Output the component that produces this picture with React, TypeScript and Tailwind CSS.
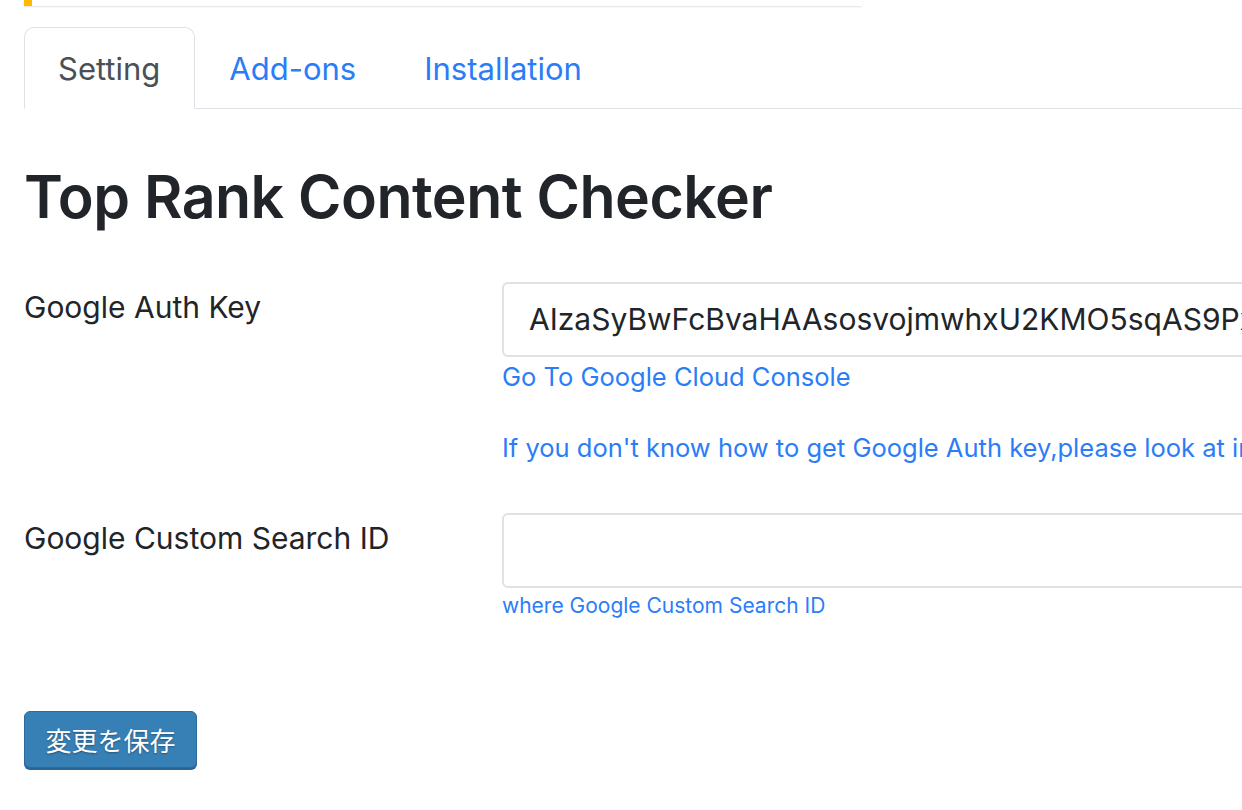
import { useState } from 'react';

const tabs = ['Setting', 'Add-ons', 'Installation'];

export default function App() {
  const [activeTab, setActiveTab] = useState('Setting');
  const [authKey, setAuthKey] = useState('AIzaSyBwFcBvaHAAsosvojmwhxU2KMO5sqAS9PxT0cLm');
  const [searchId, setSearchId] = useState('');

  return (
    <div className="w-[1242px] h-[810px] overflow-hidden bg-white font-['Inter','Noto_Sans',sans-serif] text-[#212529]">
      {/* admin notice, scrolled mostly out of view */}
      <div className="ml-[24px] w-[838px] h-[6px] bg-white border-l-[8px] border-[#ffb900] shadow-[0_1px_2px_rgba(0,0,0,0.12)]"></div>

      <div className="ml-[24px] mt-[21px] w-[1400px] flex border-b border-[#dee2e6]">
        {tabs.map((t) => (
          <button
            key={t}
            onClick={() => setActiveTab(t)}
            className={`h-[82px] text-[31px] leading-none -mb-px rounded-t-[10px] border cursor-pointer ${
              t === 'Setting' ? 'pl-[33px] pr-[34px]' : 'px-[33px]'
            } ${
              activeTab === t
                ? 'text-[#495057] border-[#dee2e6] border-b-white bg-white'
                : 'text-[#2b7df7] border-transparent'
            }`}
          >
            {t}
          </button>
        ))}
      </div>

      <div className="ml-[24px]">
        <h1 className="mt-[53px] text-[59px] leading-[1.2] font-semibold tracking-[-0.5px] text-[#212529]">
          Top Rank Content Checker
        </h1>

        <div className="mt-[49px] grid grid-cols-[478px_1000px]">
          <label className="text-[30px] leading-[1.4] pt-[4px]">Google Auth Key</label>
          <div>
            <input
              value={authKey}
              onChange={(e) => setAuthKey(e.target.value)}
              className="w-full h-[75px] pl-[25px] text-[30px] text-[#212529] border-2 border-[#e1e1e1] rounded-[6px] outline-none"
            />
            <a href="#" className="block mt-[1px] text-[25.5px] leading-[1.5] text-[#2b7df7]">
              Go To Google Cloud Console
            </a>
            <p className="mt-[33px] text-[25.5px] leading-[1.5] text-[#2b7df7] whitespace-nowrap">
              If you don't know how to get Google Auth key,please look at instruction page.
            </p>
          </div>
        </div>

        <div className="mt-[46px] grid grid-cols-[478px_1000px]">
          <label className="text-[30px] leading-[1.4] pt-[4px]">Google Custom Search ID</label>
          <div>
            <input
              value={searchId}
              onChange={(e) => setSearchId(e.target.value)}
              className="w-full h-[75px] pl-[25px] text-[30px] border-2 border-[#e1e1e1] rounded-[6px] outline-none"
            />
            <p className="mt-[2px] text-[21px] leading-[1.5] text-[#2b7df7]">where Google Custom Search ID</p>
          </div>
        </div>

        <button className="mt-[89px] w-[173px] h-[57px] rounded-[6px] bg-[#3680b6] border border-[#2c6a9c] shadow-[0_2px_0_#2a6496] text-white text-[26px] font-['Noto_Sans_CJK_JP',sans-serif] [text-shadow:0_1px_2px_rgba(0,0,0,0.35)]">
          変更を保存
        </button>
      </div>
    </div>
  );
}
